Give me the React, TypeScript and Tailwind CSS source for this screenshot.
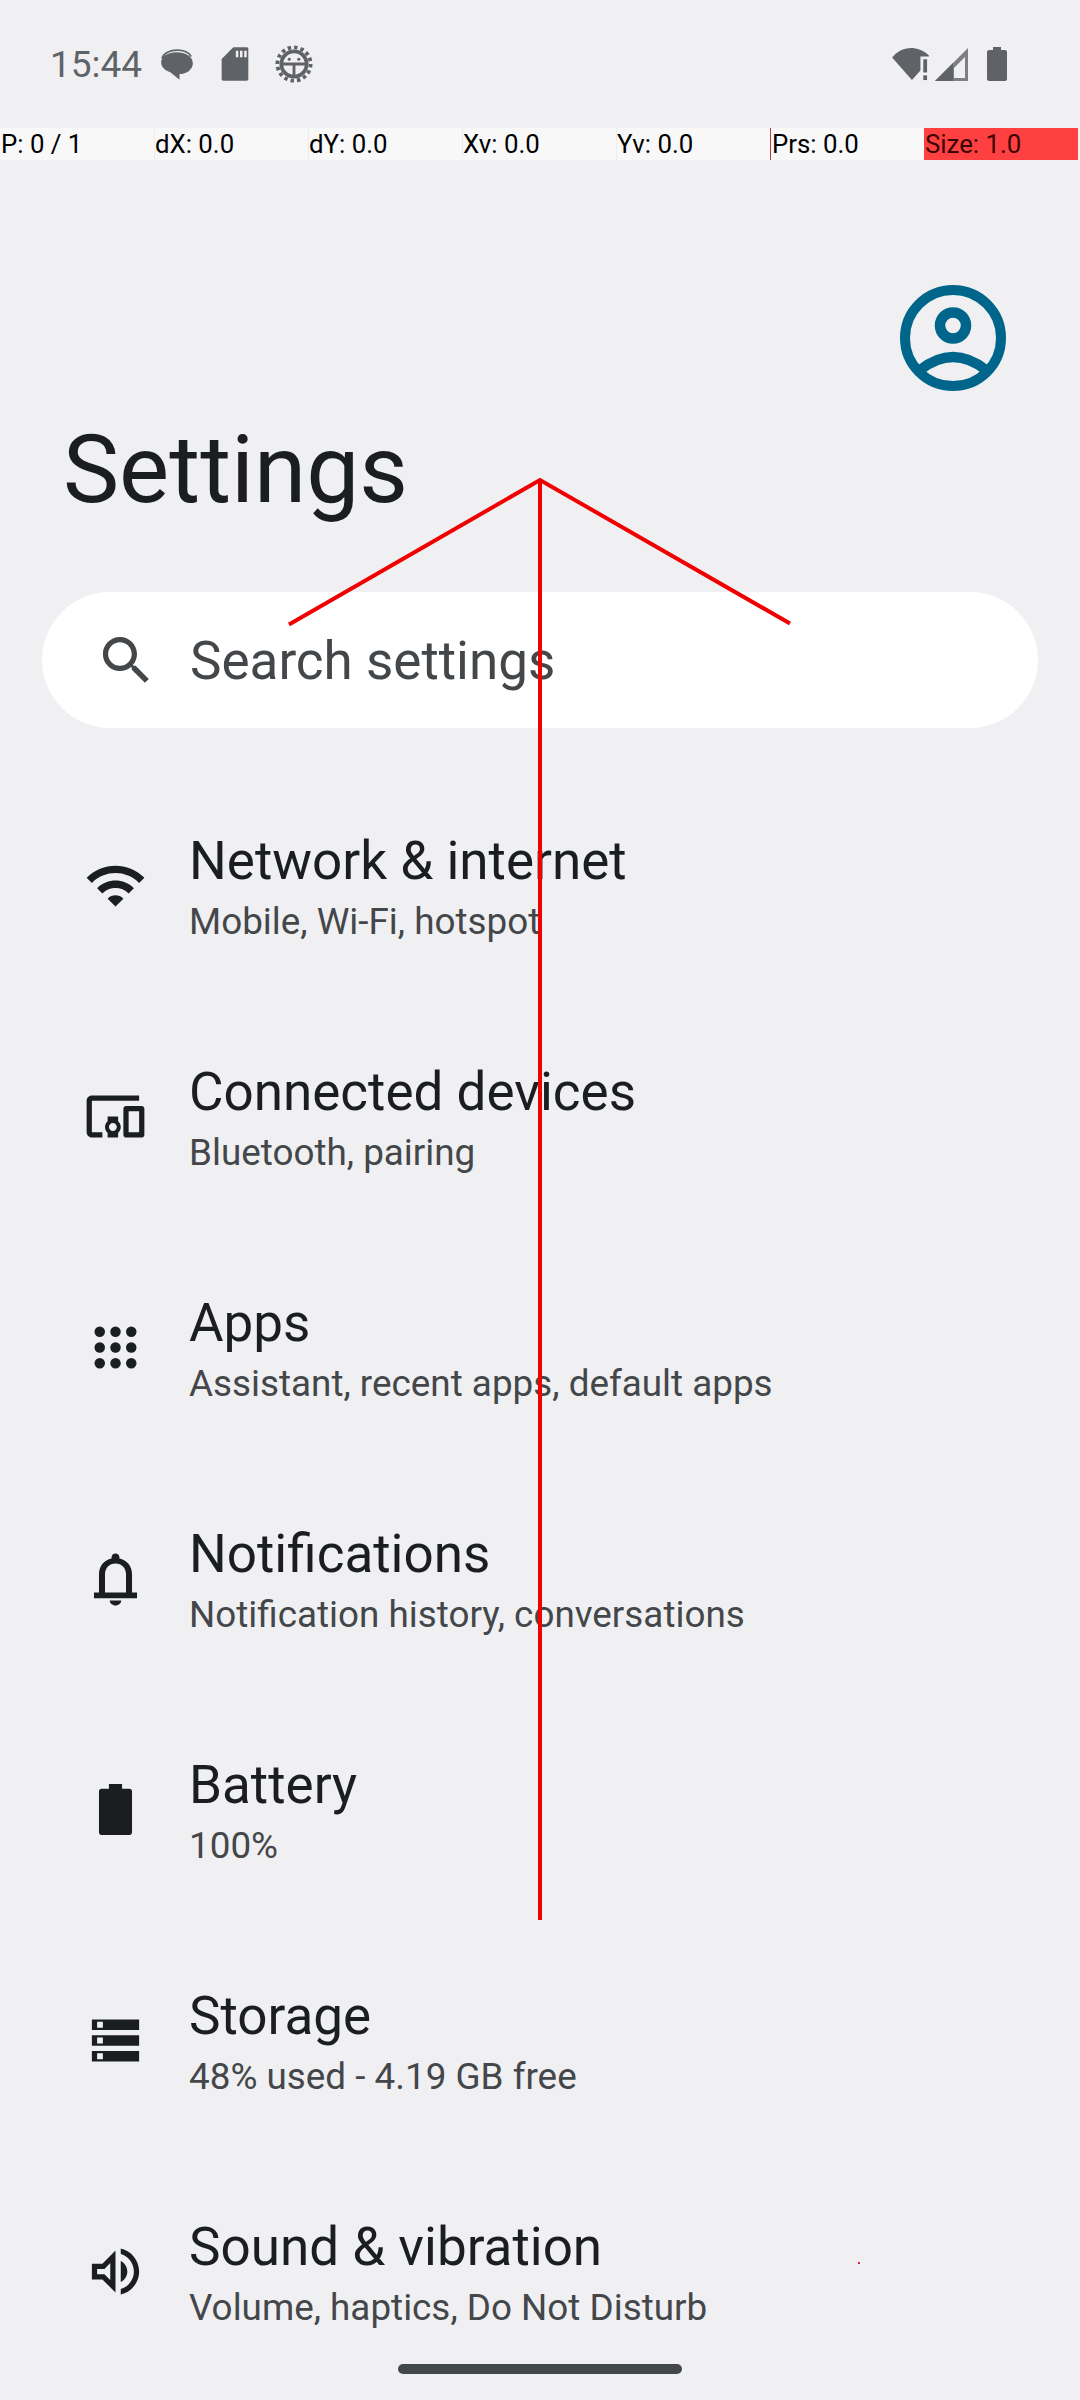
const rows = [
  { title: "Network & internet", sub: "Mobile, Wi-Fi, hotspot", icon: "wifi" },
  { title: "Connected devices", sub: "Bluetooth, pairing", icon: "devices" },
  { title: "Apps", sub: "Assistant, recent apps, default apps", icon: "apps" },
  { title: "Notifications", sub: "Notification history, conversations", icon: "bell" },
  { title: "Battery", sub: "100%", icon: "battery" },
  { title: "Storage", sub: "48% used - 4.19 GB free", icon: "storage" },
  { title: "Sound & vibration", sub: "Volume, haptics, Do Not Disturb", icon: "sound" },
];

function RowIcon({ name }: { name: string }) {
  return (
    <svg viewBox="0 0 24 24" className="w-[63px] h-[63px] shrink-0 fill-[#1b1e20]">
      {name === "wifi" && (
        <path d="M1 9l2 2c4.97-4.97 13.03-4.97 18 0l2-2C16.93 2.93 7.08 2.93 1 9zm8 8l3 3 3-3c-1.65-1.66-4.34-1.66-6 0zm-4-4l2 2c2.76-2.76 7.24-2.76 10 0l2-2C15.14 9.14 8.87 9.14 5 13z" />
      )}
      {name === "devices" && (
        <path d="M3 6h18V4H3c-1.1 0-2 .9-2 2v12c0 1.1.9 2 2 2h4v-2H3V6zm10 6H9v1.78c-.61.55-1 1.33-1 2.22 0 .89.39 1.67 1 2.22V20h4v-1.78c.61-.55 1-1.34 1-2.22s-.39-1.67-1-2.22V12zm-2 5.5c-.83 0-1.5-.67-1.5-1.5s.67-1.5 1.5-1.5 1.5.67 1.5 1.5-.67 1.5-1.5 1.5zM22 8h-6c-.5 0-1 .5-1 1v10c0 .5.5 1 1 1h6c.5 0 1-.5 1-1V9c0-.5-.5-1-1-1zm-1 10h-4v-8h4v8z" />
      )}
      {name === "apps" &&
        [6, 12, 18].map((y) =>
          [6, 12, 18].map((x) => <circle key={`${x}-${y}`} cx={x} cy={y} r="2" />)
        )}
      {name === "bell" && (
        <path d="M3.8 19.5v-2.200H5.700V10.500c0-3.300 2-5.500 4.800-6.100V4C10.500 3.100 11.200 2.500 12 2.500s1.500.6 1.500 1.500v.4c2.800.6 4.800 2.800 4.800 6.100v6.800h1.900v2.200H3.800zm4.200-2.200h8V10.500c0-2.600-1.700-4.200-4-4.200s-4 1.600-4 4.200v6.800zM9.800 20.400h4.400c0 1-1 1.900-2.200 1.900s-2.200-.9-2.200-1.900z" />
      )}
      {name === "battery" && (
        <path d="M9.500 2.300h5v1.800h2.800c.6 0 1 .4 1 1v15.600c0 .6-.4 1-1 1H6.700c-.6 0-1-.4-1-1V5.100c0-.6.4-1 1-1h2.800V2.300z" />
      )}
      {name === "storage" && (
        <path
          fillRule="evenodd"
          d="M3 4h18v4H3V4zm2 .9v2.200h2.200V4.900H5zM3 10h18v4H3v-4zm2 .9v2.200h2.200v-2.200H5zM3 16h18v4H3v-4zm2 .9v2.200h2.200v-2.200H5z"
        />
      )}
      {name === "sound" && (
        <path d="M3 9v6h4l5 5V4L7 9H3zm7-.2v6.400L7.800 13H5v-2h2.800L10 8.800zM14 7.970v8.050c1.500-.74 2.500-2.260 2.500-4.020s-1-3.290-2.500-4.030zM14 3.230v2.060c2.890.86 5 3.540 5 6.710s-2.110 5.850-5 6.710v2.060c4.010-.91 7-4.490 7-8.770s-2.990-7.860-7-8.770z" />
      )}
    </svg>
  );
}

export default function App() {
  return (
    <div className="relative h-[2400px] w-[1080px] overflow-hidden bg-[#f0f0f3] font-['Roboto',sans-serif]">
      {/* status bar */}
      <div className="flex h-[128px] items-center justify-between pl-[50px] pr-[73px] text-[#5f6368]">
        <div className="flex items-center">
          <span className="text-[37px] leading-none w-[92px]">15:44</span>
          <svg viewBox="0 0 24 24" className="ml-[15px] w-[40px] h-[40px] fill-[#5f6368]">
            <path d="M12 5c5 0 9.500 2.500 9.500 6.500s-4 6.500-8 6.500v3.500L8 17c-3-1-5.500-3-5.500-6 0-3.500 4-6 9.500-6z" />
            <path d="M3 8.500C4 5.500 8 3.700 12 3.700c3.500 0 7 1.100 8.500 3.800" fill="none" stroke="#5f6368" strokeWidth="1" />
          </svg>
          <svg viewBox="0 0 24 24" className="ml-[18px] w-[40px] h-[40px] fill-[#5f6368]">
            <path
              fillRule="evenodd"
              d="M11 2h8c.6 0 1 .4 1 1v18c0 .6-.4 1-1 1H5c-.6 0-1-.4-1-1V9l7-7zm1.500 2v4H14V4h-1.500zm2.500 0v4h1.500V4H15zm2.500 0v4H19V4h-1.500z"
            />
          </svg>
          <svg viewBox="0 0 24 24" className="ml-[20px] w-[38px] h-[38px]">
            <circle cx="12" cy="12" r="8" fill="none" stroke="#5f6368" strokeWidth="2.400" />
            <circle cx="12" cy="12" r="10.500" fill="none" stroke="#5f6368" strokeWidth="2.400" strokeDasharray="2.200 1.900" />
            <path d="M4 12h16M12 12v8" stroke="#5f6368" strokeWidth="1.800" />
            <circle cx="9" cy="9" r="1" fill="#5f6368" />
            <circle cx="15" cy="9" r="1" fill="#5f6368" />
          </svg>
        </div>
        <div className="flex items-center">
          <svg viewBox="0 0 40 36" className="w-[38px] h-[34px]">
            <path d="M0 11C5 5 12 1 20 1c6 0 13 2 19 8v1h-9v15l-9 10z" fill="#5f6368" />
            <rect x="33" y="13" width="4" height="14" fill="#5f6368" />
            <rect x="33" y="30" width="4" height="5" fill="#5f6368" />
          </svg>
          <svg viewBox="0 0 34 34" className="ml-[5px] w-[34px] h-[34px]">
            <path d="M0 34L33 1v33H0z" fill="#7c7f83" />
            <path d="M0 34L18 16v18H0z" fill="#5f6368" />
            <path d="M19 31h11V10L19 21z" fill="#f0f0f3" />
          </svg>
          <svg viewBox="0 0 20 34" className="ml-[18px] w-[20px] h-[34px] fill-[#5f6368]">
            <path d="M6 0h8v3h4c1 0 2 1 2 2v27c0 1-1 2-2 2H2c-1 0-2-1-2-2V5c0-1 1-2 2-2h4V0z" />
          </svg>
        </div>
      </div>

      {/* pointer location bar */}
      <div className="grid h-[32px] w-[1078px] grid-cols-7 bg-[#f8f8f8] text-[25.8px] leading-[32px] text-black">
        <span className="pl-[1px] whitespace-nowrap">P: 0 / 1</span>
        {["dX: 0.0", "dY: 0.0", "Xv: 0.0", "Yv: 0.0"].map((t) => (
          <span key={t} className="border-l border-[#ececec] whitespace-nowrap">{t}</span>
        ))}
        <span className="border-l border-[#b04040] pl-[1px] whitespace-nowrap">Prs: 0.0</span>
        <span className="bg-[#ff4040] pl-[1px] whitespace-nowrap text-[#3a0505]">Size: 1.0</span>
      </div>

      {/* header */}
      <div className="flex justify-end pr-[74px] pt-[125px]">
        <svg viewBox="0 0 106 106" className="w-[106px] h-[106px] fill-none stroke-[#00658b]">
          <circle cx="53" cy="53" r="48" strokeWidth="10" />
          <circle cx="53" cy="40.500" r="13" strokeWidth="10.500" />
          <path d="M20 85Q53 59 86 85" strokeWidth="10" />
        </svg>
      </div>
      <h1 className="mt-[24px] pl-[63px] text-[94.5px] leading-[110px] font-normal text-[#1b1e20]">Settings</h1>

      {/* search */}
      <div className="mx-[42px] mt-[67px] flex h-[136px] items-center rounded-full bg-white pl-[53px]">
        <svg viewBox="0 0 24 24" className="h-[63px] w-[63px] fill-[#44474a]">
          <path d="M15.500 14h-.790l-.280-.270C15.410 12.590 16 11.110 16 9.500 16 5.910 13.090 3 9.500 3S3 5.910 3 9.500 5.910 16 9.500 16c1.610 0 3.090-.590 4.230-1.570l.270.280v.790l5 4.990L20.490 19l-4.990-5zm-6 0C7.010 14 5 11.990 5 9.500S7.010 5 9.500 5 14 7.010 14 9.500 11.990 14 9.500 14z" />
        </svg>
        <span className="ml-[32px] pt-[2px] text-[53px] leading-none text-[#44474a]">Search settings</span>
      </div>

      {/* list */}
      <div className="mt-[42px]">
        {rows.map((r) => (
          <div key={r.title} className="flex h-[231px] items-center pl-[84px]">
            <RowIcon name={r.icon} />
            <div className="ml-[42px] pt-[6px]">
              <div className="text-[53px] leading-[66px] text-[#1b1e20]">{r.title}</div>
              <div className="text-[36.85px] leading-[56px] text-[#44474a]">{r.sub}</div>
            </div>
          </div>
        ))}
      </div>

      {/* nav handle */}
      <div className="absolute bottom-[26px] left-[398px] h-[10px] w-[284px] rounded-full bg-[#44474a]" />

      {/* swipe trace overlay */}
      <svg className="absolute left-0 top-0 pointer-events-none" width="1080" height="2400">
        <path d="M289 624.500L540 480L790 623.500M540 480V1920" fill="none" stroke="#f00000" strokeWidth="4" />
        <rect x="858" y="2262" width="2" height="2" fill="#e02040" />
      </svg>
    </div>
  );
}
